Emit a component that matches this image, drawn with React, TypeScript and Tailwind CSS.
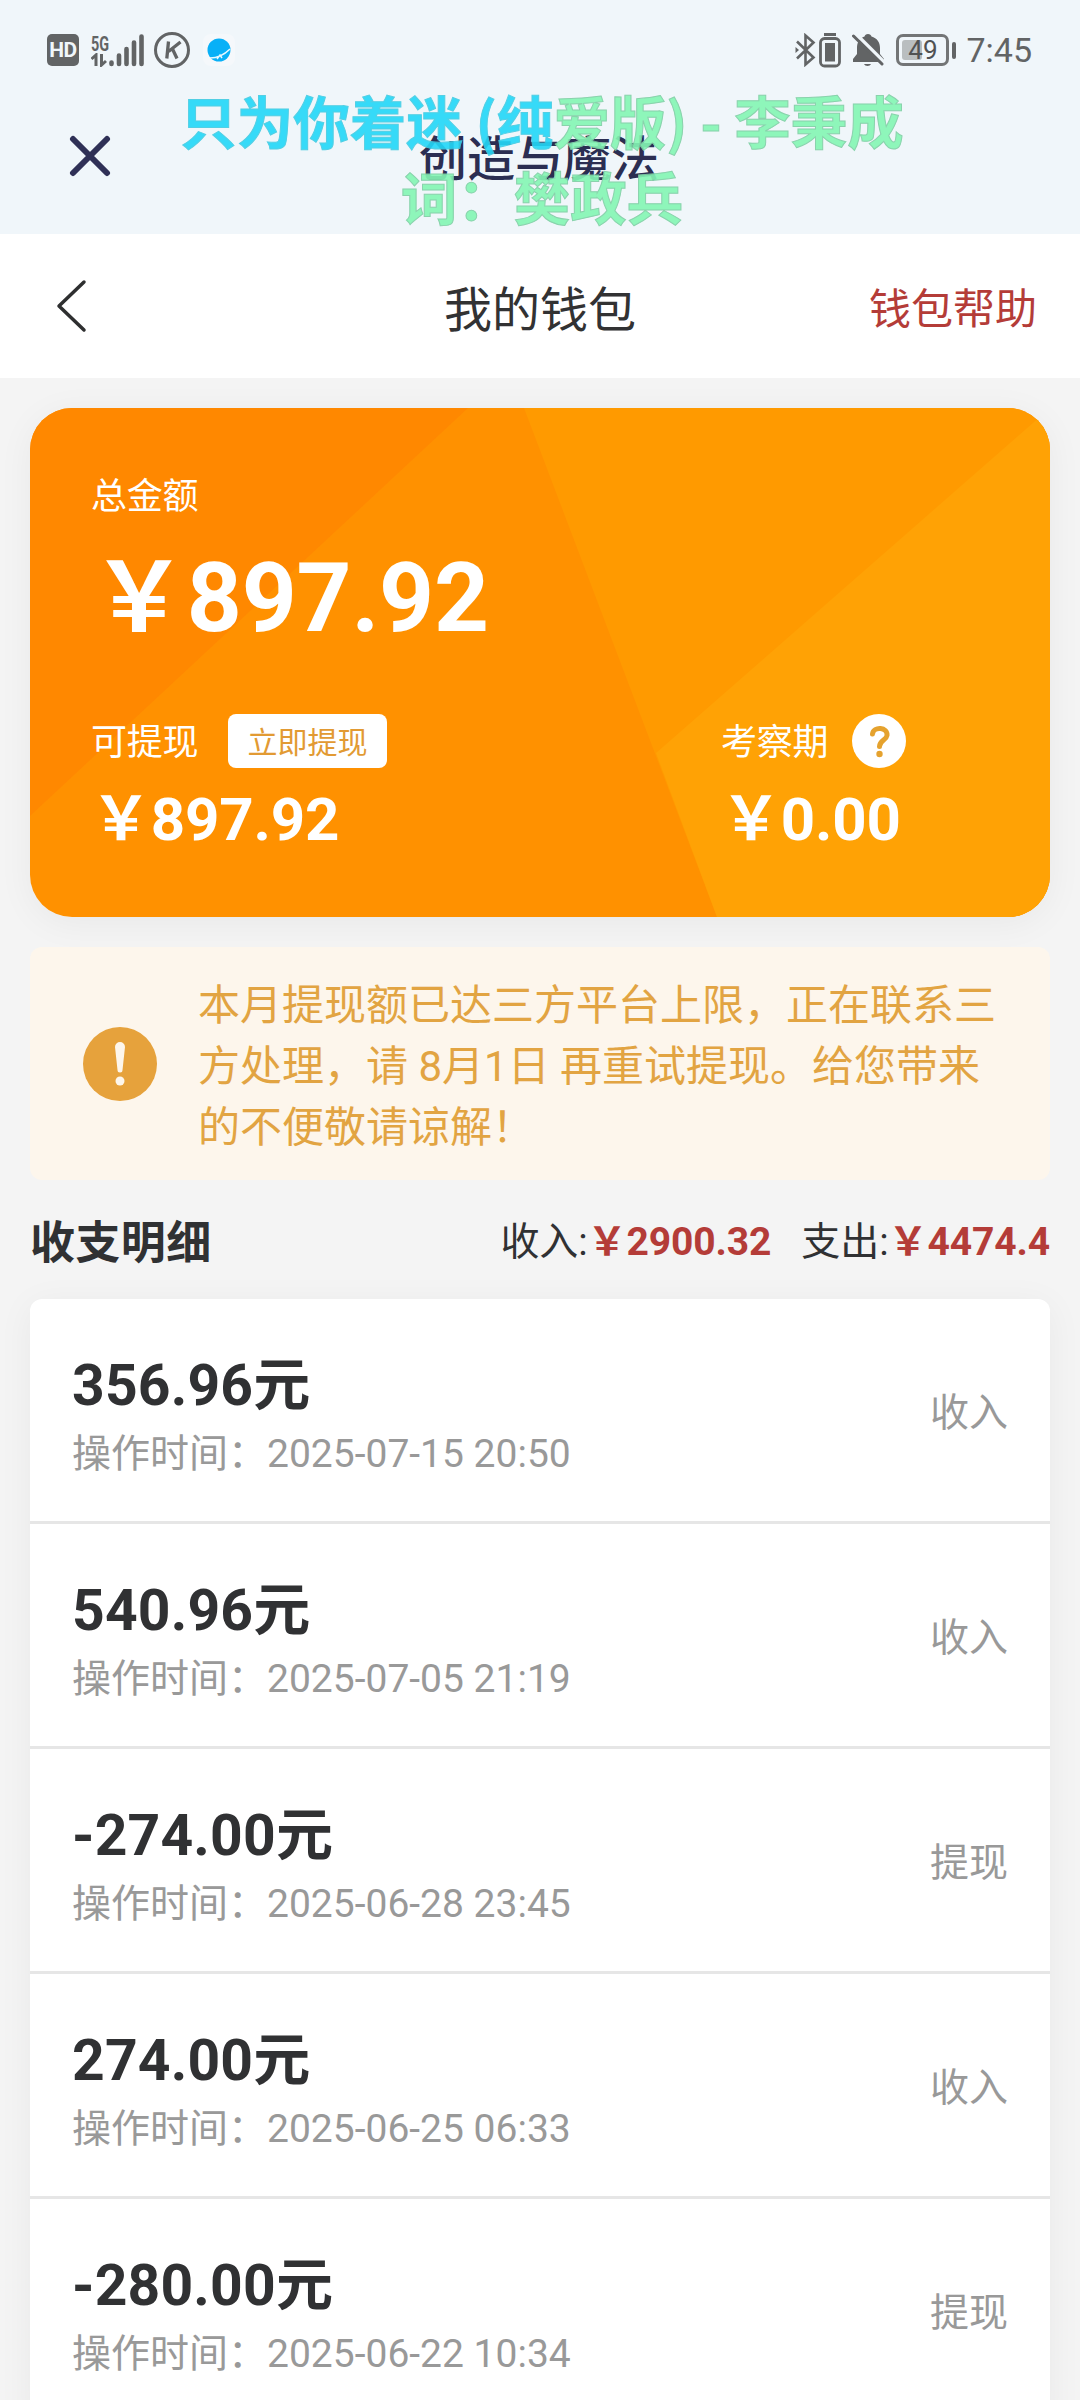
import React from 'react';

interface WalletRecord {
  id: number;
  amount: string;
  time: string;
  type: string;
}

const records: WalletRecord[] = [
  { id: 1, amount: '356.96', time: '2025-07-15 20:50', type: '收入' },
  { id: 2, amount: '540.96', time: '2025-07-05 21:19', type: '收入' },
  { id: 3, amount: '-274.00', time: '2025-06-28 23:45', type: '提现' },
  { id: 4, amount: '274.00', time: '2025-06-25 06:33', type: '收入' },
  { id: 5, amount: '-280.00', time: '2025-06-22 10:34', type: '提现' },
];

function StatusBar() {
  return (
    <div className="flex h-[100px] items-center justify-between pl-[47px] pr-[48px] text-[#626465]">
      <div className="flex items-center">
        <div className="flex h-8 w-8 items-center justify-center rounded-[5px] bg-[#626465] text-[21px] leading-8 font-bold tracking-[-0.5px] text-[#f0f6fa]">
          HD
        </div>
        <div className="ml-3 flex h-[34px] w-[53px] items-end">
          <div className="flex w-[18px] flex-col justify-between">
            <span className="origin-left scale-x-[0.72] text-[20px] leading-[17px] font-bold">5G</span>
            <svg width="16" height="14" viewBox="0 0 16 14" fill="none" stroke="currentColor" strokeWidth="3">
              <path d="M0.5 6 5 2v11M10.500 1v11L15 8" />
            </svg>
          </div>
          <svg width="35" height="34" viewBox="0 0 35 34" fill="none" stroke="currentColor" strokeWidth="4.600" strokeLinecap="round">
            <path d="M2.500 29.500v1.500M10 22.500V31M17.500 16v15M25 9.500V31M32.500 3.500V31" />
          </svg>
        </div>
        <svg className="ml-[10px]" width="36" height="36" viewBox="0 0 36 36" fill="none" stroke="currentColor">
          <circle cx="18" cy="18" r="16.500" strokeWidth="3" />
          <path d="M14.500 9.500 12.800 26.500M26.500 10 14.500 19.500M18.500 17l4.500 9.500" strokeWidth="3.300" />
        </svg>
        <div className="ml-[13px] flex h-8 w-8 items-center justify-center rounded-lg bg-[#f5f8fb]">
          <svg width="24" height="24" viewBox="0 0 24 24">
            <circle cx="12" cy="12" r="11.500" fill="#08b0f7" />
            <path d="M3 20c8 0 15-4 20-9M10 21l3-4 2 3" fill="none" stroke="#e8f8ff" strokeWidth="1.500" />
          </svg>
        </div>
      </div>
      <div className="flex items-center">
        <svg width="21" height="34" viewBox="0 0 21 34" fill="none" stroke="currentColor" strokeWidth="2.600">
          <path d="M2 8.500 18.500 24.500 10.500 31.500V2.500L18.500 9.500 2 25.500" />
          <path d="M0.500 14 4 17 0.500 20z" fill="currentColor" stroke="none" />
        </svg>
        <svg className="ml-[3px]" width="22" height="36" viewBox="0 0 22 36" fill="none" stroke="currentColor">
          <path d="M5 2.500h12" strokeWidth="3" />
          <rect x="1.500" y="6.500" width="19" height="27.500" rx="4" strokeWidth="2.800" />
          <rect x="6" y="11" width="10" height="18.500" fill="currentColor" stroke="none" />
        </svg>
        <svg className="ml-[11px]" width="32" height="34" viewBox="0 0 32 34">
          <path
            d="M16 1c2 0 3 1 3.500 2.500C25 5 28 9.500 28 15v6l4 5v3H1v-3l4-5v-6C5 9.500 7.500 5 12.500 3.500 13 2 14 1 16 1zM12 31h7c-1 2.500-6 2.500-7 0z"
            fill="currentColor"
          />
          <path d="M3 0 34 31" stroke="#f0f6fa" strokeWidth="3.500" />
          <path d="M1.500 3 30 31" stroke="currentColor" strokeWidth="3" strokeLinecap="round" />
        </svg>
        <div className="relative ml-[12px] flex h-8 w-[53px] items-center justify-center rounded-[7px] border-3 border-[#737576] text-[26px] leading-8 text-[#505253]">
          <div className="absolute top-[3px] left-[3px] h-5 w-[20px] rounded-[3px] bg-[#b9bec0]" />
          <span className="relative">49</span>
        </div>
        <div className="ml-[3px] h-[17px] w-1 rounded-sm bg-[#626465]" />
        <span className="ml-[10px] text-[34px] leading-9">7:45</span>
      </div>
    </div>
  );
}

// Desktop lyrics from the music player, floating over the app bar
function FloatingLyrics() {
  return (
    <div className="absolute top-[81px] left-[2px] w-full text-center font-['Noto_Sans_CJK_SC',sans-serif] text-[56.5px] leading-[76px] font-bold whitespace-pre text-[#84f6b4] opacity-90 [-webkit-text-stroke:1px_#7fcfa4]">
      <div>
        <span className="text-[#22d8f8] [-webkit-text-stroke:1px_#42cbe2]">只为你着迷 (纯</span>爱版) - 李秉成
      </div>
      <div>词：樊政兵</div>
    </div>
  );
}

function AppBar() {
  return (
    <div className="relative h-[234px] bg-[#f0f6fa]">
      <StatusBar />
      <div className="flex h-[112px] items-center px-[69px]">
        <svg width="42" height="42" viewBox="0 0 42 42" stroke="#2f3056" strokeWidth="6" strokeLinecap="round">
          <path d="M4 4 38 38M38 4 4 38" />
        </svg>
        <h1 className="flex-1 pt-[8px] pr-[44px] text-center text-[48px] leading-[60px] font-medium text-[#2b2e52]">创造与魔法</h1>
      </div>
      <FloatingLyrics />
    </div>
  );
}

function NavBar() {
  return (
    <div className="grid h-[144px] grid-cols-3 items-center bg-white px-[43px]">
      <svg className="ml-[13px]" width="32" height="54" viewBox="0 0 32 54" fill="none" stroke="#2e2f30" strokeWidth="3.500" strokeLinecap="round" strokeLinejoin="round">
        <path d="M28 3 3 27l25 24" />
      </svg>
      <h2 className="pt-[9px] text-center text-[48px] leading-[60px] text-[#323233]">我的钱包</h2>
      <a className="pt-[8px] text-right text-[42px] leading-[60px] text-[#b43c38]">钱包帮助</a>
    </div>
  );
}

function BalanceCard() {
  return (
    <div className="relative mt-[30px] h-[509px] overflow-hidden rounded-[42px] bg-[#ff9100] text-white">
      <svg className="absolute inset-0" width="1020" height="509" viewBox="0 0 1020 509">
        <path d="M0 0H438L0 408z" fill="#ff8800" />
        <path d="M494 0H1020V509H687z" fill="#ff9a00" />
        <path d="M1020 0V509H687L626 345z" fill="#ffa205" />
      </svg>
      <div className="relative pt-[62px] pl-[61px]">
        <div className="text-[36px] leading-[54px] tracking-[-0.3px]">总金额</div>
        <div className="mt-[26px] text-[96px] leading-[96px] font-bold tracking-[-0.2px]">￥897.92</div>
        <div className="mt-[68px] grid grid-cols-[630px_1fr]">
          <div>
            <div className="flex h-[54px] items-center">
              <span className="pt-1 text-[36px] tracking-[-0.3px]">可提现</span>
              <button className="ml-[30px] h-[54px] w-[159px] rounded-lg bg-white pt-1 text-[30px] leading-[50px] text-[#e29a33]">
                立即提现
              </button>
            </div>
            <div className="mt-[22px] text-[60px] leading-[60px] font-bold tracking-[-0.2px]">￥897.92</div>
          </div>
          <div>
            <div className="flex h-[54px] items-center">
              <span className="pt-1 text-[36px] tracking-[-0.3px]">考察期</span>
              <svg className="ml-[24px]" width="54" height="54" viewBox="0 0 54 54">
                <circle cx="27" cy="27" r="27" fill="#fff" />
                <path d="M20.500 20c1-8 15.500-7 14.500 1.500-.6 4.500-7.500 5-7.500 11" fill="none" stroke="#e5a22e" strokeWidth="5" strokeLinecap="round" />
                <circle cx="27.500" cy="40" r="3.200" fill="#e5a22e" />
              </svg>
            </div>
            <div className="mt-[22px] text-[60px] leading-[60px] font-bold tracking-[-0.2px]">￥0.00</div>
          </div>
        </div>
      </div>
    </div>
  );
}

function Notice() {
  return (
    <div className="mt-[30px] flex h-[233px] items-center rounded-xl bg-[#fdf6ec] pl-[53px] text-[#e2a442]">
      <svg className="shrink-0" width="74" height="74" viewBox="0 0 74 74">
        <circle cx="37" cy="37" r="37" fill="#e6a23c" />
        <path d="M32 20a5 5 0 0 1 10 0L39.500 43a2.500 2.500 0 0 1-5 0z" fill="#fdf6ec" />
        <circle cx="37" cy="54" r="4.500" fill="#fdf6ec" />
      </svg>
      <p className="ml-[41px] pt-[5px] text-[42px] leading-[61px] whitespace-nowrap">
        本月提现额已达三方平台上限，正在联系三
        <br />
        方处理，请 8月1日 再重试提现。给您带来
        <br />
        的不便敬请谅解！
      </p>
    </div>
  );
}

function RecordItem({ record }: { record: WalletRecord }) {
  return (
    <div className="flex h-[225px] justify-between border-b-3 border-[#e6e6e6] px-[42px] pt-[54px]">
      <div>
        <div className="text-[57px] leading-[66px] font-bold tracking-[0.2px] text-[#303133]">{record.amount}元</div>
        <div className="mt-2 text-[39px] leading-[54px] text-[#999999]">操作时间：{record.time}</div>
      </div>
      <div className="pt-[33px] text-[39px] leading-[54px] text-[#999999]">{record.type}</div>
    </div>
  );
}

export default function App() {
  return (
    <div className="h-[2400px] w-[1080px] overflow-hidden bg-[#f4f4f4] font-['Roboto','Noto_Sans_CJK_SC',sans-serif]">
      <AppBar />
      <NavBar />
      <div className="px-[30px]">
        <div className="rounded-[42px] shadow-[0_6px_36px_rgba(0,0,0,0.05)]">
          <BalanceCard />
        </div>
        <Notice />
        <div className="flex h-[119px] items-center justify-between pt-[5px] text-[#303133]">
          <h3 className="pt-1 text-[45px] leading-[60px] font-bold tracking-[0.4px]">收支明细</h3>
          <div className="flex gap-[30px] text-[39px] leading-[60px] tracking-[-0.1px]">
            <span>
              收入:<b className="text-[#b43c38]">￥2900.32</b>
            </span>
            <span>
              支出:<b className="text-[#b43c38]">￥4474.4</b>
            </span>
          </div>
        </div>
        <div className="rounded-xl bg-white shadow-[0_6px_36px_rgba(0,0,0,0.05)]">
          {records.map(record => (
            <RecordItem key={record.id} record={record} />
          ))}
        </div>
      </div>
    </div>
  );
}
